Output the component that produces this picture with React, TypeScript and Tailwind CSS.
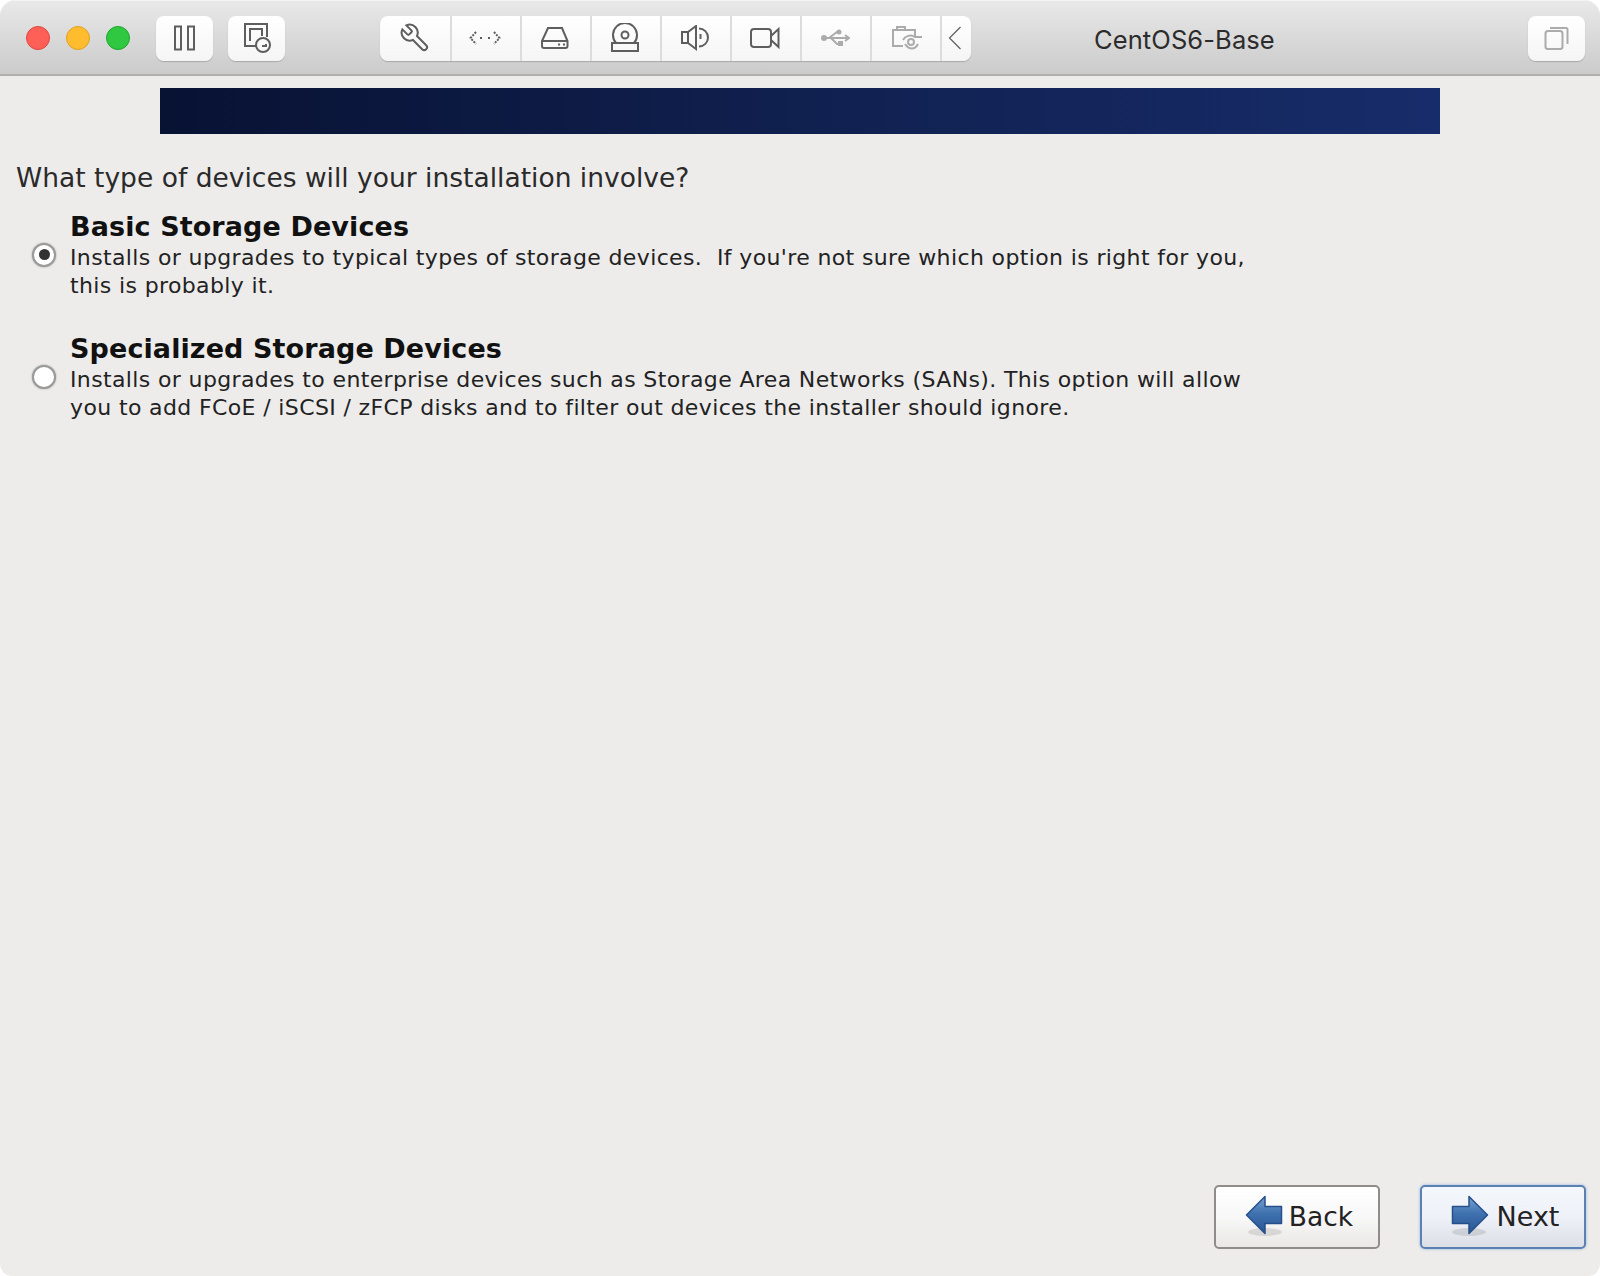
import type { ReactNode } from "react";

function Light({ className }: { className: string }) {
  return <span className={`block h-6 w-6 rounded-full border ${className}`} />;
}

function Seg({ children, width = "w-[70px] border-r-2 border-[#dcdcdc] pr-[3px]" }: { children: ReactNode; width?: string }) {
  return <div className={`flex h-full items-center justify-center ${width}`}>{children}</div>;
}

function Icon({ children, w = 32, h = 32, dim }: { children: ReactNode; w?: number; h?: number; dim?: boolean }) {
  return (
    <svg
      width={w}
      height={h}
      viewBox={`0 0 ${w} ${h}`}
      fill="none"
      stroke={dim ? "#ababab" : "#5e5e5e"}
      strokeWidth="2"
    >
      {children}
    </svg>
  );
}

function ArrowIcon({ flip }: { flip?: boolean }) {
  const id = flip ? "arrowN" : "arrowB";
  return (
    <svg width="38" height="44" viewBox="0 0 38 44" className={flip ? "-scale-x-100" : ""}>
      <defs>
        <linearGradient id={id} x1="0" y1="0" x2="0" y2="1">
          <stop offset="0" stopColor="#7ba3d2" />
          <stop offset="0.45" stopColor="#3f72b0" />
          <stop offset="1" stopColor="#2a5590" />
        </linearGradient>
      </defs>
      <ellipse cx="20" cy="37" rx="17" ry="4" fill="#000" opacity="0.1" />
      <path
        d="M1.500 20 L20 1.500 V11.500 H36.500 V28.500 H20 V38.500 Z"
        fill={`url(#${id})`}
        stroke="#244f8b"
        strokeWidth="1.500"
        strokeLinejoin="round"
      />
    </svg>
  );
}

function Option({ title, lines, checked }: { title: string; lines: string[]; checked?: boolean }) {
  return (
    <div className="flex items-center">
      <div className="flex w-[70px] justify-center pl-[18px]">
        <span className="flex h-6 w-6 items-center justify-center rounded-full border-2 border-[#9a9a9a] bg-white shadow-[0_0_2px_#999]">
          {checked && <span className="h-[11px] w-[11px] rounded-full bg-[#333]" />}
        </span>
      </div>
      <div>
        <div className="text-[27px] leading-[35px] font-bold tracking-[0.1px] text-[#111]">{title}</div>
        {lines.map((line) => (
          <div key={line} className="text-[22px] leading-[28px] tracking-[0.37px] whitespace-pre text-[#222]">
            {line}
          </div>
        ))}
      </div>
    </div>
  );
}

export default function App() {
  return (
    <div className="flex h-[1276px] w-[1600px] flex-col overflow-hidden rounded-t-2xl rounded-b-xl bg-[#edeceb] font-['DejaVu_Sans',sans-serif]">
      <header className="flex h-[76px] shrink-0 items-center border-b-2 border-[#b0afae] bg-gradient-to-b from-[#e9e9e9] to-[#cbcbcb] pt-[2px] shadow-[inset_0_1px_0_#f4f4f4]">
        <div className="ml-[26px] flex gap-4">
          <Light className="border-[#e2463f] bg-[#fe5f57]" />
          <Light className="border-[#dfa023] bg-[#febc2e]" />
          <Light className="border-[#1ea52f] bg-[#30c840]" />
        </div>
        <button className="ml-[26px] flex h-[45px] w-[57px] items-center justify-center rounded-lg bg-gradient-to-b from-white to-[#f5f5f5] shadow-[0_1px_1px_#a8a8a8]">
          <Icon w={22} h={26}>
            <path d="M1 1.500h6v23h-6zM14 1.500h6v23h-6z" />
          </Icon>
        </button>
        <button className="ml-[15px] flex h-[45px] w-[57px] items-center justify-center rounded-lg bg-gradient-to-b from-white to-[#f5f5f5] pl-[2px] shadow-[0_1px_1px_#a8a8a8]">
          <Icon w={30} h={32}>
            <path d="M13 24H2V2h22v13M7 19V7h12v7" />
            <circle cx="20" cy="23" r="7" />
            <path d="M23 22v2h-4" />
          </Icon>
        </button>
        <div className="ml-[95px] flex h-[45px] w-[591px] overflow-hidden rounded-lg bg-gradient-to-b from-white to-[#f5f5f5] shadow-[0_1px_1px_#a8a8a8]">
          <Seg width="w-[72px] border-r-2 border-[#dcdcdc]">
            <svg width="32" height="32" viewBox="0 0 24 24" fill="none" stroke="#5e5e5e" strokeWidth="1.500" className="-scale-x-100">
              <path d="M14.700 6.300a1 1 0 0 0 0 1.400l1.600 1.600a1 1 0 0 0 1.400 0l3.770-3.770a6 6 0 0 1-7.940 7.940l-6.910 6.910a2.120 2.120 0 0 1-3-3l6.910-6.910a6 6 0 0 1 7.940-7.940l-3.760 3.760z" />
            </svg>
          </Seg>
          <Seg>
            <Icon w={32} h={16}>
              <path d="M7 2 1.500 8 7 14M25 2l5.500 6L25 14" strokeDasharray="2 1.200" />
              <path d="M11 8h2M19 8h2" />
            </Icon>
          </Seg>
          <Seg>
            <Icon w={30} h={24}>
              <path d="M8 2h14l5.500 13v5a2 2 0 0 1-2 2H4a2 2 0 0 1-2-2v-5ZM2 15h26" />
              <path d="M18 18.500h2M23 18.500h2" />
            </Icon>
          </Seg>
          <Seg>
            <Icon w={30} h={30}>
              <path d="M6 20a12 12 0 1 1 18 0" />
              <circle cx="15" cy="12" r="3.500" />
              <path d="M2 20h26v8H2z" />
            </Icon>
          </Seg>
          <Seg>
            <Icon w={28} h={26}>
              <path d="M1 7h6l8-6v23l-8-6H1ZM7 7v11" />
              <path d="M18 3.500a9 9 0 0 1 0 18M19.500 9v5" />
            </Icon>
          </Seg>
          <Seg>
            <Icon w={30} h={24}>
              <rect x="1" y="3" width="20" height="18" rx="3" />
              <path d="M21 10 28.500 3v18L21 14" />
            </Icon>
          </Seg>
          <Seg>
            <Icon w={30} h={20} dim>
              <circle cx="4" cy="10" r="2" fill="#ababab" />
              <path d="M4 10h24M9 10l8-6h2M11 10l6 6h2M25 7l4 3-4 3" />
              <circle cx="19" cy="4" r="1.500" fill="#ababab" />
              <rect x="19" y="14" width="3" height="3" fill="#ababab" />
            </Icon>
          </Seg>
          <Seg width="w-[70px] border-r-2 border-[#dcdcdc] pl-[2px]">
            <Icon w={32} h={26} dim>
              <path d="M12 21H2V5h4V2h8v3h10v6M6 5h8" />
              <circle cx="20" cy="17" r="3" />
              <path d="M12 15c2-4 8-6 12-3h7M14 19c4 6 10 6 13 0" />
            </Icon>
          </Seg>
          <Seg width="w-[29px] pr-[4px]">
            <svg width="14" height="24" viewBox="0 0 14 24" fill="none" stroke="#5e5e5e" strokeWidth="1.200">
              <path d="M12.500 1 1.500 12l11 11" />
            </svg>
          </Seg>
        </div>
        <div className="mt-[4px] ml-[123px] font-['Inter',sans-serif] text-[25.500px] leading-none tracking-[0.1px] text-[#2c2c2c]">CentOS6-Base</div>
        <button className="mr-[15px] ml-auto flex h-[45px] w-[57px] items-center justify-center rounded-lg bg-gradient-to-b from-white to-[#f5f5f5] shadow-[0_1px_1px_#a8a8a8]">
          <Icon w={26} h={26} dim>
            <rect x="1.500" y="6" width="17" height="18" rx="2.500" />
            <path d="M6 3h16a1.500 1.500 0 0 1 1.500 1.500V19" />
          </Icon>
        </button>
      </header>

      <main className="flex min-h-0 flex-1 flex-col">
        <div className="mt-[12px] ml-[160px] h-[46px] w-[1280px] bg-gradient-to-r from-[#081233] via-[#10204f] via-50% to-[#172c6a]" />
        <h1 className="mt-[27px] ml-4 text-[26.500px] leading-[34px] font-normal text-[#2a2a2a]">
          What type of devices will your installation involve?
        </h1>
        <div className="mt-[14px] flex flex-col gap-[31px]">
          <Option
            checked
            title="Basic Storage Devices"
            lines={["Installs or upgrades to typical types of storage devices.  If you're not sure which option is right for you,", "this is probably it."]}
          />
          <Option
            title="Specialized Storage Devices"
            lines={["Installs or upgrades to enterprise devices such as Storage Area Networks (SANs). This option will allow", "you to add FCoE / iSCSI / zFCP disks and to filter out devices the installer should ignore."]}
          />
        </div>
        <div className="mt-auto mr-[14px] mb-[27px] flex justify-end gap-[40px]">
          <button className="flex h-[64px] w-[166px] items-center justify-center gap-[6px] rounded-[5px] border-2 border-[#8f8c89] bg-gradient-to-b from-white via-[#f8f8f8] via-50% to-[#e9e8e6] pl-[4px] text-[26.500px] text-[#222]">
            <ArrowIcon />
            Back
          </button>
          <button className="flex h-[64px] w-[166px] items-center justify-center gap-[8px] rounded-[5px] border-2 border-[#5b80b2] bg-gradient-to-b from-[#f4f7fc] via-[#eef1f7] via-50% to-[#dcdfe5] pl-[4px] text-[27px] text-[#222] shadow-[0_0_3px_#8fb0dc]">
            <ArrowIcon flip />
            Next
          </button>
        </div>
      </main>
    </div>
  );
}
